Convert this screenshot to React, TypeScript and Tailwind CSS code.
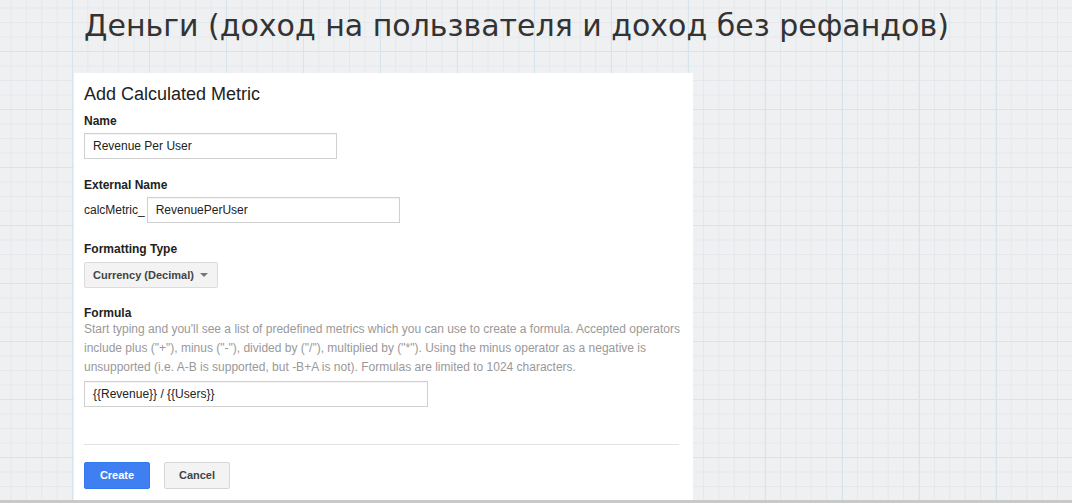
import { useState } from "react";

const grid =
  "bg-[#eef0f2] bg-[linear-gradient(to_right,#d6e4ec_1px,transparent_1px),linear-gradient(to_bottom,#d6e4ec_1px,transparent_1px),linear-gradient(to_right,#e5e8eb_1px,transparent_1px),linear-gradient(to_bottom,#e5e8eb_1px,transparent_1px)] bg-[size:77px_58px,77px_58px,15.4px_14.5px,15.4px_14.5px] bg-[position:72px_51px,72px_51px,72px_51px,72px_51px]";

function Field({ value, width }: { value: string; width: string }) {
    return (
        <div className={`h-[26px] ${width} border border-[#d0d0d0] bg-white px-[8px] flex items-center text-[12px] text-[#222] shadow-[inset_0_1px_1px_rgba(0,0,0,0.05)]`}>
            {value}
        </div>
    );
}

export default function App() {
    const [name] = useState("Revenue Per User");

    return (
        <div className={`w-[1072px] h-[503px] overflow-hidden flex flex-col ${grid}`}>
            <div className="h-[73px] pl-[84px] pt-[6px]">
                <h1 className="text-[30px] leading-[40px] text-[#333] whitespace-nowrap font-['DejaVu_Sans',Verdana,sans-serif]">
                    Деньги (доход на пользвателя и доход без рефандов)
                </h1>
            </div>

            <div className="ml-[74px] w-[619px] h-[427px] bg-white pl-[10px] pr-[14px] pt-[10px] font-['Liberation_Sans',Arial,sans-serif] flex flex-col">
                <h2 className="text-[18px] leading-[22px] text-[#222]">Add Calculated Metric</h2>

                <label className="mt-[8px] text-[12px] leading-[16px] font-bold text-[#222]">Name</label>
                <div className="mt-[4px]">
                    <Field value={name} width="w-[253px]" />
                </div>

                <label className="mt-[18px] text-[12px] leading-[16px] font-bold text-[#222]">External Name</label>
                <div className="mt-[4px] flex items-center gap-[2px]">
                    <span className="text-[12px] text-[#222]">calcMetric_</span>
                    <Field value="RevenuePerUser" width="w-[253px]" />
                </div>

                <label className="mt-[18px] text-[12px] leading-[16px] font-bold text-[#222]">Formatting Type</label>
                <div className="mt-[5px]">
                    <button className="h-[26px] w-[134px] rounded-[2px] border border-[#dcdcdc] bg-[#f3f3f3] pl-[8px] pr-[9px] flex items-center justify-between text-[11px] font-bold text-[#444]">
                        <span>Currency (Decimal)</span>
                        <span className="w-0 h-0 border-l-[4px] border-r-[4px] border-t-[4px] border-l-transparent border-r-transparent border-t-[#777]" />
                    </button>
                </div>

                <label className="mt-[17px] text-[12px] leading-[16px] font-bold text-[#222]">Formula</label>
                <p className="-mt-[1px] text-[12px] leading-[19px] text-[#999] whitespace-nowrap">
                    Start typing and you'll see a list of predefined metrics which you can use to create a formula. Accepted operators
                    <br />
                    include plus ("+"), minus ("-"), divided by ("/"), multiplied by ("*"). Using the minus operator as a negative is
                    <br />
                    unsupported (i.e. A-B is supported, but -B+A is not). Formulas are limited to 1024 characters.
                </p>
                <div className="mt-[4px]">
                    <Field value="{{Revenue}} / {{Users}}" width="w-[344px]" />
                </div>

                <div className="mt-[37px] h-px w-[595px] bg-[#e3e3e3]" />

                <div className="mt-[17px] flex gap-[14px]">
                    <button className="h-[27px] w-[66px] rounded-[2px] border border-[#3079ed] bg-[#3f7ff2] text-[11px] font-bold text-white">
                        Create
                    </button>
                    <button className="h-[27px] w-[66px] rounded-[2px] border border-[#d6d6d6] bg-[#f3f3f3] text-[11px] font-bold text-[#444]">
                        Cancel
                    </button>
                </div>
            </div>

            <div className="h-[3px] bg-[#c9c9c9]" />
        </div>
    );
}
